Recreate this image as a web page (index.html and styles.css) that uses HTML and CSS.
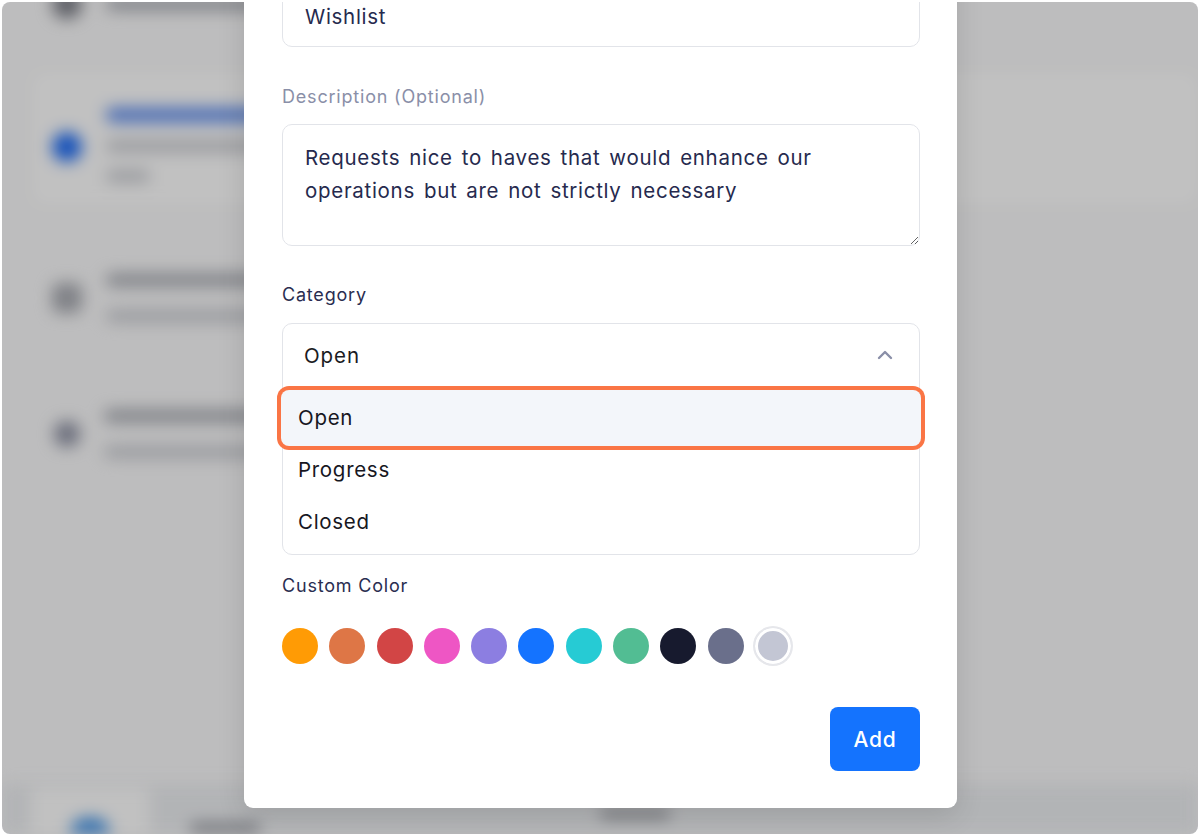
FILE: index.html
```html
<!DOCTYPE html>
<html>
<head>
    <title>Add Category</title>
    <link rel="stylesheet" href="styles.css">
</head>
<body>
    <div class="frame">
        <div class="app">
            <div class="nav-list">
                <div class="nav-item item-first">
                    <span class="nav-icon dot-dark"></span>
                    <div class="nav-text">
                        <span class="bar bar-title"></span>
                    </div>
                </div>
                <div class="nav-item nav-card">
                    <span class="nav-icon dot-blue"></span>
                    <div class="nav-text">
                        <span class="bar bar-blue"></span>
                        <span class="bar bar-sub"></span>
                        <span class="bar bar-sub short"></span>
                    </div>
                </div>
                <div class="nav-item item-spaced">
                    <span class="nav-icon square-gray"></span>
                    <div class="nav-text">
                        <span class="bar bar-title"></span>
                        <span class="bar bar-sub"></span>
                    </div>
                </div>
                <div class="nav-item">
                    <span class="nav-icon dot-gray"></span>
                    <div class="nav-text">
                        <span class="bar bar-title"></span>
                        <span class="bar bar-sub"></span>
                    </div>
                </div>
            </div>
            <div class="app-footer">
                <div class="footer-tab"><span class="footer-blob"></span></div>
                <span class="footer-bar"></span>
                <span class="footer-bar mid"></span>
            </div>
        </div>

        <div class="scrim"></div>

        <div class="modal">
            <div class="field">
                <input class="text-input" type="text" value="Wishlist">
            </div>

            <div class="field">
                <label class="field-label muted">Description (Optional)</label>
                <textarea class="text-area">Requests nice to haves that would enhance our
operations but are not strictly necessary</textarea>
            </div>

            <div class="field">
                <label class="field-label">Category</label>
                <div class="select open">
                    <div class="select-head">
                        <span>Open</span>
                        <svg class="chevron" width="16" height="10" viewBox="0 0 16 10">
                            <path d="M2 8 L8 2 L14 8" fill="none" stroke="#8a8fa8" stroke-width="2.4" stroke-linecap="round" stroke-linejoin="round"/>
                        </svg>
                    </div>
                    <ul class="select-options">
                        <li class="option selected">Open</li>
                        <li class="option">Progress</li>
                        <li class="option">Closed</li>
                    </ul>
                </div>
            </div>

            <div class="field swatch-field">
                <label class="field-label">Custom Color</label>
                <div class="swatches">
                    <span class="swatch" style="background:#ff9b05"></span>
                    <span class="swatch" style="background:#de7646"></span>
                    <span class="swatch" style="background:#d24545"></span>
                    <span class="swatch" style="background:#ee56c4"></span>
                    <span class="swatch" style="background:#8c7ee1"></span>
                    <span class="swatch" style="background:#1473ff"></span>
                    <span class="swatch" style="background:#26cbd4"></span>
                    <span class="swatch" style="background:#52bd93"></span>
                    <span class="swatch" style="background:#171a2e"></span>
                    <span class="swatch" style="background:#6a6f8b"></span>
                    <span class="swatch active" style="background:#c3c6d4"></span>
                </div>
            </div>

            <div class="actions">
                <button class="btn-primary">Add</button>
            </div>
        </div>
    </div>
</body>
</html>
```

FILE: styles.css
```css
body {
    margin: 0;
    background: #ffffff;
    font-family: "Inter", "Open Sans", sans-serif;
}
.frame {
    position: relative;
    margin: 2px;
    height: 832px;
    border-radius: 8px;
    overflow: hidden;
    background: #fafafb;
}

/* page behind the dialog */
.app {
    height: 100%;
    display: flex;
    flex-direction: column;
    justify-content: space-between;
    filter: blur(8px);
}
.nav-list {
    display: flex;
    flex-direction: column;
    margin-top: -66px;
    padding-left: 30px;
}
.nav-item {
    display: flex;
    align-items: center;
    gap: 24px;
    height: 136px;
    padding-left: 20px;
}
.item-spaced {
    margin-top: 25px;
}
.nav-card {
    height: 133px;
    align-items: flex-start;
    padding-top: 36px;
    box-sizing: border-box;
    background: #ffffff;
    border-radius: 10px;
}
.nav-card .nav-icon {
    margin-top: 24px;
}
.nav-icon {
    flex: none;
    width: 30px;
    height: 30px;
    border-radius: 50%;
}
.dot-dark { background: #7d7f88; }
.dot-blue { background: #1e6cf5; }
.square-gray { background: #a9abb2; border-radius: 8px; }
.dot-gray { background: #8d91a3; width: 26px; height: 26px; margin-left: 2px; }
.nav-text {
    display: flex;
    flex-direction: column;
    gap: 24px;
    width: 400px;
}
.nav-card .nav-text { gap: 18px; }
.bar {
    display: block;
    height: 12px;
    border-radius: 6px;
    background: #a9abb3;
}
.bar-title { width: 360px; background: #a3a6ae; }
.bar-blue { width: 360px; height: 14px; background: #5a8aee; }
.bar-sub { width: 320px; background: #c8cad0; }
.bar-sub.short { width: 44px; }

.app-footer {
    display: flex;
    align-items: flex-end;
    gap: 40px;
    height: 50px;
    padding-left: 28px;
    background: #eceef1;
}
.footer-tab {
    width: 120px;
    height: 46px;
    background: #ffffff;
    border-radius: 8px 8px 0 0;
    display: flex;
    justify-content: center;
    align-items: flex-end;
}
.footer-blob {
    width: 40px;
    height: 16px;
    background: #3b8fe6;
    border-radius: 20px 20px 0 0;
}
.footer-bar {
    width: 70px;
    height: 8px;
    margin-bottom: 2px;
    background: #7c7f88;
    border-radius: 4px;
}
.footer-bar.mid {
    margin-left: 300px;
    margin-bottom: 16px;
    background: #8a8c93;
}

.scrim {
    position: absolute;
    top: 0;
    left: 0;
    right: 0;
    bottom: 0;
    background: rgba(0, 0, 0, 0.245);
}

/* dialog */
.modal {
    position: absolute;
    left: 242px;
    bottom: 26px;
    width: 713px;
    box-sizing: border-box;
    padding: 30px 37px 37px 38px;
    background: #ffffff;
    border-radius: 9px;
    box-shadow: 0 8px 28px rgba(0, 0, 0, 0.12);
}
.field {
    display: flex;
    flex-direction: column;
}
.field-label {
    height: 24px;
    line-height: 24px;
    font-size: 18px;
    letter-spacing: 0.8px;
    color: #2a2d50;
    margin-bottom: 16px;
}
.field-label.muted {
    color: #8a8fa8;
    margin-bottom: 15px;
}
.text-input,
.text-area {
    box-sizing: border-box;
    width: 100%;
    border: 1px solid #e2e4e9;
    border-radius: 10px;
    font-family: inherit;
    font-size: 20.5px;
    letter-spacing: 0.7px;
    color: #262a4e;
    outline: none;
}
.text-input {
    height: 62px;
    padding: 0 22px;
    margin-bottom: 38px;
}
.text-area {
    height: 122px;
    padding: 16px 22px;
    line-height: 33px;
    word-spacing: 2.5px;
    margin-bottom: 37px;
    resize: vertical;
}

.select {
    border: 1px solid #e2e4e9;
    border-radius: 10px;
    margin-bottom: 19px;
}
.select-head {
    display: flex;
    align-items: center;
    justify-content: space-between;
    height: 62px;
    padding: 0 26px 0 21px;
    font-size: 20.5px;
    letter-spacing: 0.9px;
    color: #1b1b22;
}
.select-options {
    list-style: none;
    margin: 0;
    padding: 6px 0;
}
.option {
    height: 52px;
    line-height: 52px;
    padding-left: 15px;
    font-size: 20.5px;
    letter-spacing: 0.7px;
    color: #17171f;
}
.option.selected {
    background: #f3f6fa;
    border-radius: 6px;
    box-shadow: 0 0 0 2px #f3f6fa, 0 0 0 6px #fa7545;
}

.swatch-field .field-label {
    margin-bottom: 30px;
}
.swatches {
    display: flex;
    gap: 11.3px;
}
.swatch {
    width: 36px;
    height: 36px;
    border-radius: 50%;
}
.swatch.active {
    box-shadow: 0 0 0 2px #e6e7eb, inset 0 0 0 3px #ffffff;
}

.actions {
    display: flex;
    justify-content: flex-end;
    margin-top: 43px;
}
.btn-primary {
    width: 90px;
    height: 64px;
    border: none;
    border-radius: 8px;
    background: #1473fe;
    color: #ffffff;
    font-family: inherit;
    font-size: 21px;
    letter-spacing: 0.8px;
    font-weight: 500;
}
```
